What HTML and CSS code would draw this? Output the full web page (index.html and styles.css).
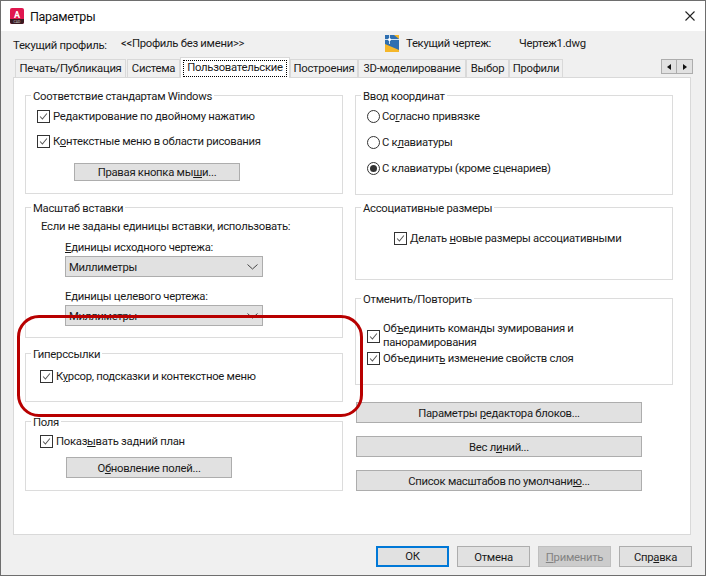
FILE: index.html
```html
<!DOCTYPE html>
<html lang="ru">
<head>
<meta charset="utf-8">
<title>Параметры</title>
<link rel="stylesheet" href="styles.css">
</head>
<body>
<div class="window">
  <header class="titlebar">
    <svg class="app-icon" width="14" height="16" viewBox="0 0 14 16">
      <rect x="0" y="0" width="14" height="16" rx="2" fill="#e0174f"/>
      <path d="M0 11H14V14a2 2 0 0 1-2 2H2a2 2 0 0 1-2-2Z" fill="#3a1a22"/>
      <text x="7" y="9.5" text-anchor="middle" class="app-letter">A</text>
      <text x="7" y="14.800" text-anchor="middle" class="app-cad">CAD</text>
    </svg>
    <span class="title">Параметры</span>
    <svg class="close" width="10" height="10" viewBox="0 0 10 10"><path d="M0.5 0.5L9.5 9.5M9.5 0.5L0.5 9.5" stroke="#222" stroke-width="1.1" fill="none"/></svg>
  </header>

  <div class="body">
    <div class="info">
      <span class="info-label">Текущий профиль:</span>
      <span class="info-profile">&lt;&lt;Профиль без имени&gt;&gt;</span>
      <svg class="dwg-icon" width="14" height="17" viewBox="0 0 14 17">
        <rect width="14" height="17" fill="#f5b72a"/>
        <path d="M0 0H9L14 4V15L0 9Z" fill="#2f6fb0"/>
        <path d="M0 4.500H14M4.500 0V9" stroke="#cfe2f3" stroke-width="1"/>
        <circle cx="4.500" cy="4.500" r="1.500" fill="#fff"/>
      </svg>
      <span class="info-doc-label">Текущий чертеж:</span>
      <span class="info-doc">Чертеж1.dwg</span>
    </div>

    <div class="tabs">
      <span class="tab tab-print">Печать/Публикация</span>
      <span class="tab tab-system">Система</span>
      <span class="tab tab-active"><span class="tab-focus">Пользовательские</span></span>
      <span class="tab tab-build">Построения</span>
      <span class="tab tab-3d">3D-моделирование</span>
      <span class="tab tab-select">Выбор</span>
      <span class="tab tab-profiles">Профили</span>
      <span class="spin">
        <span class="spin-btn"><span class="tri-left"></span></span>
        <span class="spin-btn"><span class="tri-right"></span></span>
      </span>
    </div>

    <main class="panel">
      <div class="col">
        <fieldset class="group g-windows">
          <legend>Соответствие стандартам Windows</legend>
          <label class="check c-w1"><svg class="cb" viewBox="0 0 13 13"><path d="M2.500 6.500L5.200 9.500L10.500 3" /></svg><span>Редактирование по <u>д</u>войному нажатию</span></label>
          <label class="check c-w2"><svg class="cb" viewBox="0 0 13 13"><path d="M2.500 6.500L5.200 9.500L10.500 3" /></svg><span>К<u>о</u>нтекстные меню в области рисования</span></label>
          <button class="btn btn-mouse">Правая кнопка мы<u>ш</u>и...</button>
        </fieldset>

        <fieldset class="group g-scale">
          <legend>Масштаб вставки</legend>
          <div class="note">Если не заданы единицы вставки, использовать:</div>
          <div class="field-label fl-1"><u>Е</u>диницы исходного чертежа:</div>
          <div class="combo"><span>Миллиметры</span><svg class="chev" width="11" height="6" viewBox="0 0 11 6"><path d="M0.500 0.500L5.500 5L10.500 0.500"/></svg></div>
          <div class="field-label fl-2">Е<u>д</u>иницы целевого чертежа:</div>
          <div class="combo"><span>Миллиметры</span><svg class="chev" width="11" height="6" viewBox="0 0 11 6"><path d="M0.500 0.500L5.500 5L10.500 0.500"/></svg></div>
        </fieldset>

        <fieldset class="group g-links">
          <legend>Гиперссылки</legend>
          <label class="check c-link"><svg class="cb" viewBox="0 0 13 13"><path d="M2.500 6.500L5.200 9.500L10.500 3" /></svg><span>К<u>у</u>рсор, подсказки и контекстное меню</span></label>
        </fieldset>

        <fieldset class="group g-fields">
          <legend>Поля</legend>
          <label class="check c-field"><svg class="cb" viewBox="0 0 13 13"><path d="M2.500 6.500L5.200 9.500L10.500 3" /></svg><span>Показ<u>ы</u>вать задний план</span></label>
          <button class="btn btn-fields">О<u>б</u>новление полей...</button>
        </fieldset>
      </div>

      <div class="col">
        <fieldset class="group g-coords">
          <legend>Ввод координат</legend>
          <label class="radio r-1"><span class="rb"></span><span>Со<u>г</u>ласно привязке</span></label>
          <label class="radio r-2"><span class="rb"></span><span>С к<u>л</u>авиатуры</span></label>
          <label class="radio r-3"><span class="rb rb-on"></span><span>С клавиатуры (кроме <u>с</u>ценариев)</span></label>
        </fieldset>

        <fieldset class="group g-assoc">
          <legend>Ассоциативные размеры</legend>
          <label class="check c-assoc"><svg class="cb" viewBox="0 0 13 13"><path d="M2.500 6.500L5.200 9.500L10.500 3" /></svg><span>Делать <u>н</u>овые размеры ассоциативными</span></label>
        </fieldset>

        <fieldset class="group g-undo">
          <legend>Отменить/Повторить</legend>
          <label class="check c-undo1"><svg class="cb" viewBox="0 0 13 13"><path d="M2.500 6.500L5.200 9.500L10.500 3" /></svg><span>Об<u>ъ</u>единить команды зумирования и<br>панорамирования</span></label>
          <label class="check c-undo2"><svg class="cb" viewBox="0 0 13 13"><path d="M2.500 6.500L5.200 9.500L10.500 3" /></svg><span>Объединит<u>ь</u> изменение свойств слоя</span></label>
        </fieldset>

        <div class="side-buttons">
          <button class="btn btn-wide">Параметры <u>р</u>едактора блоков...</button>
          <button class="btn btn-wide">Вес л<u>и</u>ний...</button>
          <button class="btn btn-wide">Список масштабов по умолчани<u>ю</u>...</button>
        </div>
      </div>
    </main>

    <footer class="actions">
      <button class="btn act act-ok">ОК</button>
      <button class="btn act">Отмена</button>
      <button class="btn act act-off"><u>П</u>рименить</button>
      <button class="btn act">Спр<u>а</u>вка</button>
    </footer>
  </div>

  <div class="highlight"></div>
</div>
</body>
</html>
```
FILE: styles.css
```css
* { box-sizing: border-box; }
html, body { margin: 0; padding: 0; }
body {
  width: 706px;
  height: 576px;
  overflow: hidden;
  font-family: "Roboto", "Liberation Sans", sans-serif;
  font-size: 11.3px;
  letter-spacing: -0.28px;
  line-height: 17px;
  color: #1a1a1a;
}
.window {
  position: relative;
  width: 706px;
  height: 576px;
  border: 1px solid #6e6e6e;
  background: #f0f0f0;
  display: flex;
  flex-direction: column;
}
.titlebar {
  height: 30px;
  flex: none;
  background: #fff;
  display: flex;
  align-items: center;
  padding: 0 10px 0 9px;
}
.app-icon { flex: none; margin-top: -1px; }
.app-letter { font-size: 9px; font-weight: 700; fill: #fff; }
.app-cad { font-size: 3.500px; fill: #c9c9c9; letter-spacing: 0; }
.title { margin-left: 6px; font-size: 12.5px; letter-spacing: -0.3px; margin-top: 1px; color: #111; }
.close { margin-left: auto; margin-top: -1px; }
.body { flex: 1; display: flex; flex-direction: column; padding: 0 13px 0 12px; }

.info { height: 26px; flex: none; display: flex; align-items: center; position: relative; }
.info-label { width: 108px; margin-top: 3px; }
.info-profile { width: 264px; margin-top: -1px; }
.dwg-icon { flex: none; margin-top: -1px; }
.info-doc-label { margin-left: 7px; width: 113px; margin-top: -1px; }
.info-doc { margin-top: -1px; }

.tabs { display: flex; align-items: flex-end; height: 20px; flex: none; padding-left: 2px; position: relative; z-index: 1; white-space: nowrap; }
.tab {
  height: 18px;
  background: #f0f0f0;
  border: 1px solid #d9d9d9;
  border-bottom: 0;
  margin-right: 1px;
  line-height: 18px;
  text-align: center;
  flex: none;
}
.tab-print { width: 111px; }
.tab-system { width: 53px; margin-right: 0; }
.tab-active {
  width: 110px;
  height: 21px;
  margin-bottom: -1px;
  background: #fff;
  padding: 2px 2px 0;
  margin-right: 0;
  line-height: 15px;
}
.tab-focus { display: block; height: 17px; outline: 1px dotted #000; outline-offset: -1px; }
.tab-build { width: 68px; margin-right: 0; }
.tab-3d { width: 108px; margin-right: 0; }
.tab-select { width: 43px; margin-right: 0; }
.tab-profiles { width: 54px; }
.spin { display: flex; margin-left: auto; align-self: flex-start; margin-top: 2px; margin-right: -1px; }
.spin-btn { width: 16px; height: 15px; background: #e1e1e1; border: 1px solid #adadad; display: flex; align-items: center; justify-content: center; }
.spin-btn + .spin-btn { margin-left: -1px; width: 17px; }
.tri-left { border: 3px solid transparent; border-right: 4px solid #111; border-left: 0; }
.tri-right { border: 3px solid transparent; border-left: 4px solid #111; border-right: 0; }

.panel {
  height: 458px;
  flex: none;
  width: 678px;
  background: #fff;
  border: 1px solid #d9d9d9;
  padding: 9px 0 0 11px;
  display: flex;
  gap: 12px;
}
.col { width: 318px; flex: none; display: flex; flex-direction: column; }

.group { margin: 0; border: 1px solid #dcdcdc; padding: 0 10px; min-width: 0; }
.group legend { margin-left: -5px; padding: 0 2px; height: 16px; line-height: 19px; }
.g-windows { height: 107px; }
.g-scale { height: 139px; margin-top: 5px; }
.g-links { height: 57px; margin-top: 7px; }
.g-fields { height: 78px; margin-top: 11px; }
.g-coords { height: 108px; }
.g-assoc { height: 81px; margin-top: 4px; }
.g-undo { height: 95px; margin-top: 10px; }

.check { display: flex; align-items: center; gap: 3px; }
.cb { width: 13px; height: 13px; flex: none; border: 1px solid #333; background: #fff; }
.cb path { fill: none; stroke: #555; stroke-width: 1.2; }
.c-w1 { margin: 5px 0 0 1px; }
.c-w2 { margin: 8px 0 0 1px; }
.c-link { margin: 7px 0 0 4px; }
.c-field { margin: 4px 0 0 4px; }
.c-assoc { margin: 15px 0 0 28px; }
.c-undo1 { margin: 16px 0 0 1px; line-height: 14px; }
.c-undo2 { margin: 0 0 0 1px; }

.radio { display: flex; align-items: center; gap: 2px; margin-left: 1px; }
.r-1 { margin-top: 5px; }
.r-2, .r-3 { margin-top: 9px; }
.rb { width: 13px; height: 13px; flex: none; border: 1px solid #333; border-radius: 50%; background: #fff; display: flex; align-items: center; justify-content: center; }
.rb-on::after { content: ""; width: 7px; height: 7px; border-radius: 50%; background: #333; }

.btn {
  display: block;
  font: inherit;
  letter-spacing: inherit;
  color: inherit;
  background: #e1e1e1;
  border: 1px solid #adadad;
  padding: 1px 0 0;
  height: 21px;
  text-align: center;
}
.btn-mouse { width: 166px; height: 18px; margin: 13px 0 0 38px; line-height: 15px; padding-top: 0; }
.btn-fields { width: 166px; margin: 7px 0 0 30px; }
.side-buttons { display: flex; flex-direction: column; gap: 13px; margin-top: 17px; }
.btn-wide { width: 286px; margin-left: 1px; }

.note { margin: 0 0 0 5px; padding-top: 3px; height: 20px; }
.field-label { margin-left: 29px; }
.fl-1 { margin-top: 4px; height: 17px; }
.fl-2 { margin-top: 11px; height: 17px; }
.combo {
  margin-left: 29px;
  width: 198px;
  height: 21px;
  background: #e1e1e1;
  border: 1px solid #adadad;
  display: flex;
  align-items: center;
  justify-content: space-between;
  padding: 1px 4px 0 3px;
}
.chev { fill: none; stroke: #444; stroke-width: 1; margin-top: -1px; }

.actions { display: flex; justify-content: flex-end; gap: 8px; padding-top: 11px; }
.act { width: 73px; }
.act-ok { border: 2px solid #0078d7; padding-top: 0; }
.act-off { background: #ccc; border-color: #bfbfbf; color: #838383; }

.highlight {
  position: absolute;
  left: 16px;
  top: 314px;
  width: 346px;
  height: 102px;
  border: 3px solid #b80000;
  border-radius: 22px;
  pointer-events: none;
}
```
